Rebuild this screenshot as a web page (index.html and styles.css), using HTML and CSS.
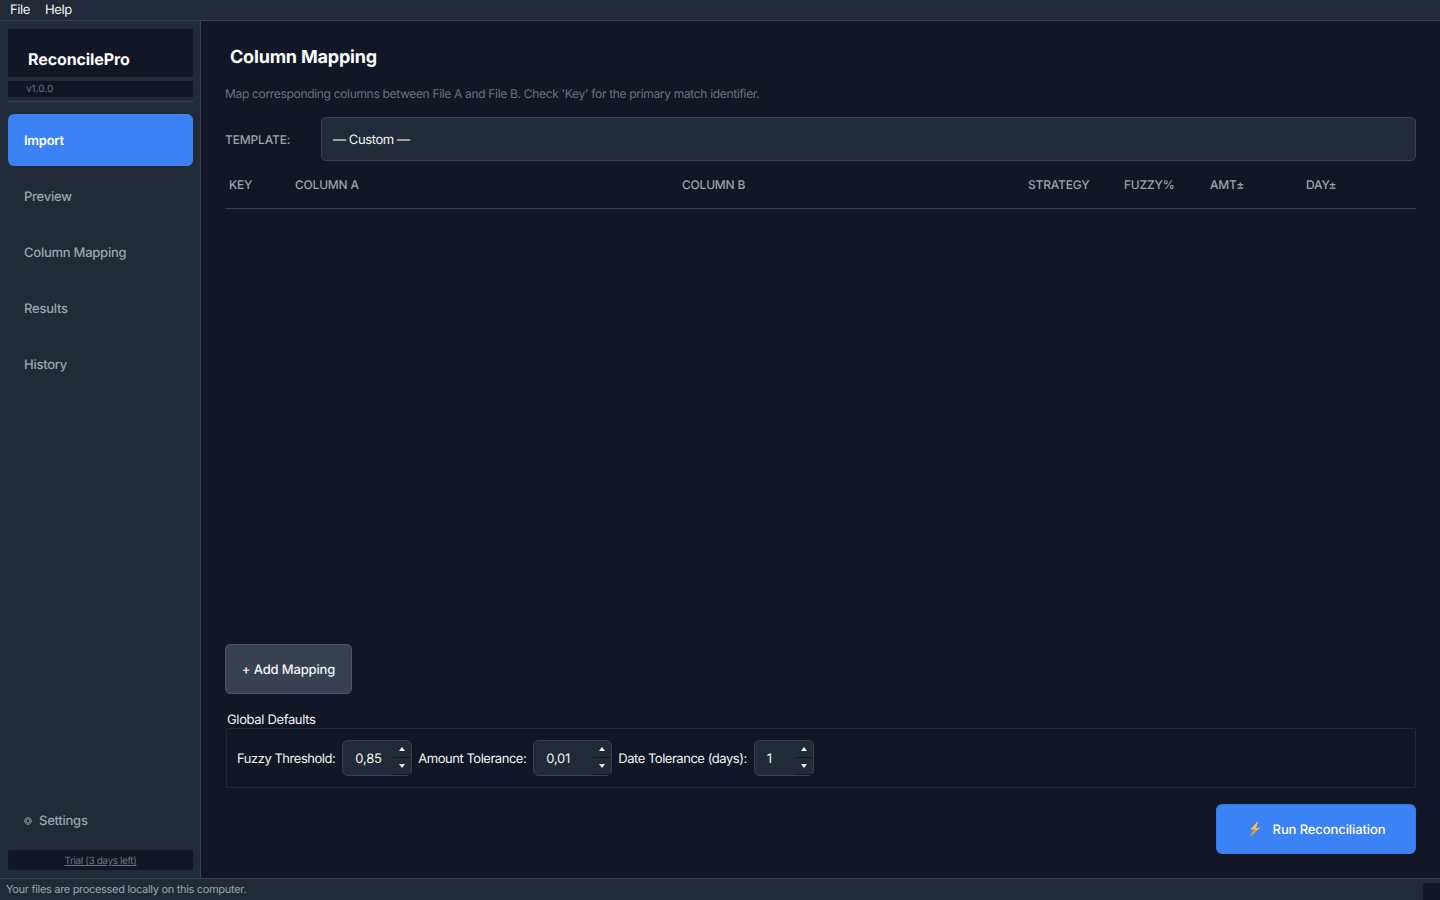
FILE: index.html
```html
<!DOCTYPE html>
<html lang="en">
<head>
<meta charset="utf-8">
<title>ReconcilePro</title>
<link rel="stylesheet" href="styles.css">
</head>
<body>
<div class="app">
  <div class="menubar"><span>File</span><span>Help</span></div>
  <div class="body">
    <aside class="sidebar">
      <div class="logo">ReconcilePro</div>
      <div class="version">v1.0.0</div>
      <div class="divider"></div>
      <nav class="nav">
        <div class="nav-item active">Import</div>
        <div class="nav-item">Preview</div>
        <div class="nav-item">Column Mapping</div>
        <div class="nav-item">Results</div>
        <div class="nav-item">History</div>
      </nav>
      <div class="settings">
        <svg class="gear" viewBox="0 0 8 8" width="8" height="8"><circle cx="4" cy="4" r="3.4" fill="none" stroke="#9ca3af" stroke-width="1" stroke-dasharray="1.3 0.5"/><circle cx="4" cy="4" r="2.2" fill="none" stroke="#9ca3af" stroke-width="1"/></svg>
        <span class="settings-text">Settings</span>
      </div>
      <div class="trial"><a>Trial (3 days left)</a></div>
    </aside>
    <main class="main">
      <h1 class="title">Column Mapping</h1>
      <p class="desc">Map corresponding columns between File A and File B. Check 'Key' for the primary match identifier.</p>
      <div class="template-row">
        <label class="template-label">TEMPLATE:</label>
        <div class="combo">— Custom —</div>
      </div>
      <div class="table-head">
        <span>KEY</span><span>COLUMN A</span><span>COLUMN B</span><span>STRATEGY</span><span>FUZZY%</span><span>AMT±</span><span>DAY±</span>
      </div>
      <div class="table-body"></div>
      <div class="add-row"><button class="add-btn">+ Add Mapping</button></div>
      <div class="group-title">Global Defaults</div>
      <div class="group">
        <span class="field-label">Fuzzy Threshold:</span>
        <div class="spin spin-a"><span class="spin-val">0,85</span><div class="spin-btns"><i class="up"></i><i class="down"></i></div></div>
        <span class="field-label">Amount Tolerance:</span>
        <div class="spin spin-c"><span class="spin-val">0,01</span><div class="spin-btns"><i class="up"></i><i class="down"></i></div></div>
        <span class="field-label">Date Tolerance (days):</span>
        <div class="spin spin-b"><span class="spin-val">1</span><div class="spin-btns"><i class="up"></i><i class="down"></i></div></div>
      </div>
      <div class="run-row">
        <button class="run-btn">
          <svg class="bolt" viewBox="0 0 14 16" width="14" height="16"><path d="M10.5 0.5 L3 8.8 L7 8.2 L3 15.5 L13.5 6.6 L9 7.2 L11.2 0.5 Z" fill="#f7bf3f"/><path d="M7 8.2 L3 15.5 L9.5 10 Z" fill="#e8913a"/></svg>
          <span class="run-text">Run Reconciliation</span>
        </button>
      </div>
    </main>
  </div>
  <footer class="status">
    <span>Your files are processed locally on this computer.</span>
    <div class="grip"></div>
  </footer>
</div>
</body>
</html>
```

FILE: styles.css
```css
* { box-sizing: border-box; }
html, body { margin: 0; padding: 0; height: 100%; }
body {
  font-family: Inter, "Liberation Sans", sans-serif;
  font-size: 13px;
  color: #f3f4f6;
  background: #111726;
  overflow: hidden;
  text-rendering: geometricPrecision;
  -webkit-font-smoothing: antialiased;
}
.app { display: flex; flex-direction: column; height: 900px; width: 1440px; }

.menubar {
  height: 21px;
  flex: none;
  background: #212a38;
  border-bottom: 1px solid #374151;
  display: flex;
  align-items: center;
  gap: 15px;
  padding: 0 10px;
  font-size: 13px;
  letter-spacing: -0.4px;
  color: #f3f4f6;
}

.body { flex: 1; display: flex; min-height: 0; }

.sidebar {
  width: 201px;
  flex: none;
  background: #212a38;
  border-right: 1px solid #374151;
  display: flex;
  flex-direction: column;
  padding: 8px 7px 8px 8px;
}
.logo {
  height: 48px;
  background: #111726;
  font-size: 16px;
  font-weight: 700;
  letter-spacing: -0.1px;
  color: #fff;
  padding: 20px 0 0 20px;
  line-height: 20px;
}
.version {
  margin-top: 4px;
  height: 16px;
  background: #111726;
  color: #6b7280;
  font-size: 10px;
  line-height: 16px;
  padding-left: 18px;
}
.divider { margin-top: 4px; height: 1px; background: #374151; }
.nav { margin-top: 12px; display: flex; flex-direction: column; gap: 4px; }
.nav-item {
  height: 52px;
  display: flex;
  align-items: center;
  padding: 2px 0 0 16px;
  border-radius: 6px;
  color: #9ca3af;
  font-size: 13px;
  font-weight: 500;
  letter-spacing: -0.25px;
}
.nav-item.active { background: #3b82f6; color: #fff; font-weight: 600; }
.settings {
  margin-top: auto;
  height: 26px;
  display: flex;
  align-items: center;
  gap: 7px;
  padding-left: 16px;
  color: #9ca3af;
  font-size: 13px;
  font-weight: 500;
  letter-spacing: -0.25px;
}
.settings-text { margin-top: 2px; }
.gear { flex: none; margin-top: 2px; }
.trial {
  margin-top: 17px;
  height: 20px;
  padding-top: 2px;
  background: #111726;
  border-radius: 2px;
  display: flex;
  align-items: center;
  justify-content: center;
  font-size: 10px;
  letter-spacing: -0.4px;
  color: #6b7280;
}
.trial a { text-decoration: underline; }

.main {
  flex: 1;
  min-width: 0;
  background: #111726;
  display: flex;
  flex-direction: column;
  padding: 0 24px 24px;
}
.title {
  margin: 26px 0 0;
  padding-left: 5px;
  font-size: 18px;
  line-height: 22px;
  font-weight: 700;
  letter-spacing: -0.2px;
  color: #fff;
}
.desc {
  margin: 17px 0 0;
  font-size: 12px;
  line-height: 16px;
  letter-spacing: -0.32px;
  color: #6b7280;
}
.template-row { margin-top: 15px; display: flex; align-items: center; height: 44px; }
.template-label { width: 96px; flex: none; font-size: 12px; font-weight: 500; letter-spacing: -0.15px; color: #9ca3af; }
.combo {
  flex: 1;
  height: 44px;
  background: #212a38;
  border: 1px solid #374151;
  border-radius: 5px;
  display: flex;
  align-items: center;
  padding: 2px 0 0 11px;
  font-size: 13px;
  letter-spacing: -0.4px;
  color: #f3f4f6;
}
.table-head {
  height: 48px;
  flex: none;
  border-bottom: 1px solid #374151;
  display: grid;
  grid-template-columns: 66px 387px 346px 96px 86px 96px 1fr;
  align-items: center;
  padding-left: 4px;
  font-size: 12px;
  font-weight: 500;
  letter-spacing: -0.2px;
  color: #9ca3af;
}
.table-body { flex: 1; min-height: 0; }
.add-row { display: flex; }
.add-btn {
  width: 127px;
  height: 50px;
  background: #374151;
  border: 1px solid #4b5563;
  border-radius: 5px;
  color: #f3f4f6;
  font: 500 13px Inter, "Liberation Sans", sans-serif;
  letter-spacing: -0.15px;
  text-rendering: geometricPrecision;
  padding: 2px 0 0;
}
.group-title { margin-top: 18px; padding-left: 2px; font-size: 13px; line-height: 16px; letter-spacing: -0.35px; color: #f3f4f6; }
.group {
  margin: 0 0 0 1px;
  height: 60px;
  border: 1px solid #1f2937;
  border-radius: 2px;
  display: flex;
  align-items: center;
  gap: 6px;
  padding-left: 10px;
  font-size: 13px;
}
.field-label { margin-top: 2px; color: #f3f4f6; letter-spacing: -0.47px; }
.spin {
  height: 36px;
  margin-left: 1px;
  background: #212a38;
  border: 1px solid #374151;
  border-radius: 6px;
  display: flex;
  align-items: stretch;
  justify-content: space-between;
  font-size: 13px;
}
.spin-a { width: 70px; }
.spin-b { width: 60px; }
.spin-c { width: 79px; }
.spin-val { align-self: center; margin-top: 2px; padding-left: 12px; letter-spacing: -0.2px; color: #f3f4f6; }
.spin-btns { width: 18px; display: flex; flex-direction: column; }
.spin-btns i { flex: 1; display: flex; align-items: center; justify-content: center; }
.spin-btns i::after { content: ""; width: 0; height: 0; border-left: 3px solid transparent; border-right: 3px solid transparent; }
.spin-btns .up { border-bottom: 1px solid #111726; }
.spin-btns .up::after { border-bottom: 4px solid #f3f4f6; }
.spin-btns .down { border-bottom: 1px solid #111726; }
.spin-btns .down::after { border-top: 4px solid #f3f4f6; }
.run-row { margin-top: 16px; display: flex; justify-content: flex-end; }
.run-btn {
  width: 200px;
  height: 50px;
  background: #3b82f6;
  border: 1px solid #2f7df4;
  border-radius: 6px;
  color: #fff;
  font: 500 13px Inter, "Liberation Sans", sans-serif;
  letter-spacing: -0.1px;
  text-rendering: geometricPrecision;
  display: flex;
  align-items: center;
  justify-content: center;
  gap: 12px;
  padding: 0;
}
.run-text { margin-top: 2px; }
.status {
  height: 22px;
  flex: none;
  background: #212a38;
  border-top: 1px solid #374151;
  display: flex;
  align-items: center;
  justify-content: space-between;
  padding-left: 6px;
  font-size: 11px;
  letter-spacing: -0.31px;
  color: #9ca3af;
}
.status span { margin-bottom: 1px; }
.grip { align-self: flex-end; width: 17px; height: 17px; background: #111726; }
```
